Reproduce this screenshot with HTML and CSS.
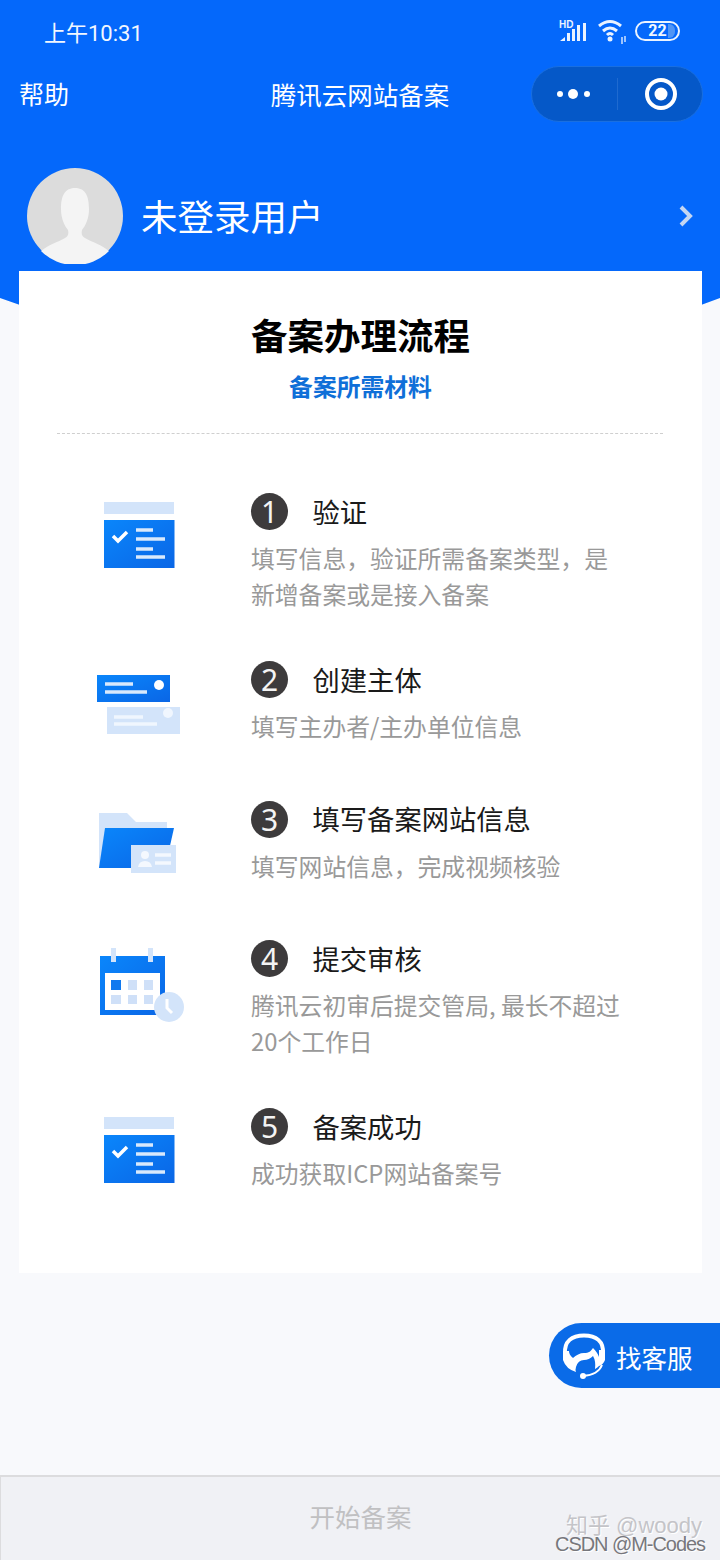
FILE: index.html
```html
<!DOCTYPE html>
<html lang="zh-CN">
<head>
    <meta charset="UTF-8">
    <meta name="viewport" content="width=device-width, initial-scale=1.0">
    <title>腾讯云网站备案</title>
    <link rel="stylesheet" href="styles.css">
</head>
<body>
    <svg class="defs" width="0" height="0">
        <defs>
            <linearGradient id="blue" x1="0" y1="0" x2="1" y2="1">
                <stop offset="0" stop-color="#0a86fb"/>
                <stop offset="1" stop-color="#0a66e6"/>
            </linearGradient>
            <symbol id="icon-check" viewBox="0 0 100 90">
                <rect x="14" y="9" width="70" height="12" fill="#d3e4fa"/>
                <rect x="14" y="27" width="70.500" height="48" fill="url(#blue)"/>
                <path d="M23 43l5 5 9-9" fill="none" stroke="#fff" stroke-width="3.500"/>
                <path d="M46 37h17M46 46h29M46 56h17M46 64h29" stroke="#d9e9fc" stroke-width="3.500"/>
            </symbol>
        </defs>
    </svg>

    <header class="top">
        <div class="status">
            <span class="time">上午10:31</span>
            <div class="status-icons">
                <svg width="30" height="24" viewBox="0 0 30 24">
                    <text x="0" y="9" class="hd">HD</text>
                    <path d="M1 22l5-4v4zM8 22v-8h3v8zM13 22V10h3v12zM18 22V6h3v16zM24 22V4h3v18z" fill="#eaf3ff"/>
                </svg>
                <svg width="30" height="26" viewBox="0 0 30 26">
                    <path d="M2 8q11-9 22 0M6 13q7-6 14 0M10 17q3-3 6 0" fill="none" stroke="#eaf3ff" stroke-width="3"/>
                    <circle cx="13" cy="21" r="2.500" fill="#eaf3ff"/>
                    <path d="M25 19v7M28 18v6" stroke="#cfe2ff" stroke-width="1.500"/>
                </svg>
                <div class="battery"><span class="battery-level"></span><span class="battery-text">22</span></div>
            </div>
        </div>

        <nav class="nav">
            <span class="nav-help">帮助</span>
            <span class="nav-title">腾讯云网站备案</span>
            <div class="capsule">
                <div class="capsule-side">
                    <svg width="36" height="12" viewBox="0 0 36 12">
                        <circle cx="4" cy="6" r="3" fill="#fff"/>
                        <circle cx="17" cy="6" r="5" fill="#fff"/>
                        <circle cx="31" cy="6" r="3" fill="#fff"/>
                    </svg>
                </div>
                <div class="capsule-side capsule-right">
                    <svg width="34" height="34" viewBox="0 0 34 34">
                        <circle cx="17" cy="17" r="14" fill="none" stroke="#fff" stroke-width="4"/>
                        <circle cx="17" cy="17" r="6.500" fill="#fff"/>
                    </svg>
                </div>
            </div>
        </nav>

        <div class="user">
            <svg class="avatar" width="96" height="96" viewBox="0 0 96 96">
                <circle cx="48" cy="48" r="48" fill="#dcdcdc"/>
                <path d="M48 20c-11 0-14 9-14 21 0 9 3 16 7 21 1 4 0 6-3 8-7 4-17 7-24 13a48 48 0 0 0 68 0c-7-6-17-9-24-13-3-2-4-4-3-8 4-5 7-12 7-21 0-12-3-21-14-21z" fill="#f4f4f4"/>
            </svg>
            <span class="user-name">未登录用户</span>
            <svg class="chevron" width="16" height="22" viewBox="0 0 16 22">
                <path d="M3 2l9 9-9 9" fill="none" stroke="#c4d6f2" stroke-width="4"/>
            </svg>
        </div>
    </header>

    <main class="card">
        <h1>备案办理流程</h1>
        <a class="material-link">备案所需材料</a>
        <div class="divider"></div>

        <section class="step">
            <svg class="step-icon" width="100" height="90"><use href="#icon-check"/></svg>
            <div class="step-body">
                <div class="step-head"><span class="num">1</span><span class="step-title">验证</span></div>
                <p>填写信息，验证所需备案类型，是<br>新增备案或是接入备案</p>
            </div>
        </section>

        <section class="step">
            <svg class="step-icon" width="100" height="90" viewBox="0 0 100 90">
                <rect x="17" y="46" width="73" height="27" fill="#d3e4fa"/>
                <path d="M24 56h29M24 63h43" stroke="#f0f6fe" stroke-width="3.500"/>
                <circle cx="78" cy="52" r="5" fill="#f0f6fe"/>
                <rect x="7" y="14" width="73" height="27" fill="url(#blue)"/>
                <path d="M15 23h28M15 31h42" stroke="#d9e9fc" stroke-width="3.500"/>
                <circle cx="69" cy="24" r="5" fill="#fff"/>
            </svg>
            <div class="step-body">
                <div class="step-head"><span class="num">2</span><span class="step-title">创建主体</span></div>
                <p>填写主办者/主办单位信息</p>
            </div>
        </section>

        <section class="step">
            <svg class="step-icon" width="100" height="90" viewBox="0 0 100 90">
                <path d="M9 12h28l9 9h31v46H9z" fill="#d3e4fa"/>
                <path d="M15 27h69l-9 40H9z" fill="url(#blue)"/>
                <rect x="41" y="44" width="45" height="28" fill="#d3e4fa"/>
                <circle cx="55" cy="54" r="4" fill="#f4f8fe"/>
                <path d="M48 66q1-6 7-6t7 6z" fill="#f4f8fe"/>
                <path d="M65 54h16M65 62h16" stroke="#f4f8fe" stroke-width="3.500"/>
            </svg>
            <div class="step-body">
                <div class="step-head"><span class="num">3</span><span class="step-title">填写备案网站信息</span></div>
                <p>填写网站信息，完成视频核验</p>
            </div>
        </section>

        <section class="step">
            <svg class="step-icon" width="100" height="90" viewBox="0 0 100 90">
                <rect x="10" y="16" width="65" height="59" fill="url(#blue)"/>
                <rect x="15" y="33" width="55" height="37" fill="#fff"/>
                <path d="M23.500 8v14M60.500 8v14" stroke="#d3e4fa" stroke-width="5"/>
                <rect x="21" y="40" width="10" height="10" fill="#1079ef"/>
                <path d="M38 40h9v10h-9zM54 40h9v10h-9zM21 55h10v9H21zM38 55h9v9h-9zM54 55h9v9h-9z" fill="#cfe0f8"/>
                <circle cx="79" cy="67" r="15" fill="#d3e4fa"/>
                <path d="M77 59v9l5 5" fill="none" stroke="#fff" stroke-width="3"/>
            </svg>
            <div class="step-body">
                <div class="step-head"><span class="num">4</span><span class="step-title">提交审核</span></div>
                <p>腾讯云初审后提交管局, 最长不超过<br>20个工作日</p>
            </div>
        </section>

        <section class="step">
            <svg class="step-icon" width="100" height="90"><use href="#icon-check"/></svg>
            <div class="step-body">
                <div class="step-head"><span class="num">5</span><span class="step-title">备案成功</span></div>
                <p>成功获取ICP网站备案号</p>
            </div>
        </section>
    </main>

    <div class="spacer"></div>

    <footer class="bottom-bar">开始备案</footer>

    <div class="service">
        <svg width="46" height="52" viewBox="0 0 46 52">
            <path d="M4 24C3 11 11 5.500 23 5.500s20 5.500 19 18.500" fill="none" stroke="#fff" stroke-width="4"/>
            <path d="M2 21h6c0 2 1 5 4 7 3-3 7-5 11-5 5 0 7-2 9-5 3 3 5 6 6 9v-7h6v10q-2 5-6 6-2 2-4 3 1-8-2-13-4 4-9 4-6 0-8 7-1 3 0 5-10-3-13-12z" fill="#fff"/>
            <path d="M41 35q-4 10-19 11" fill="none" stroke="#fff" stroke-width="2"/>
            <circle cx="22" cy="46" r="3" fill="#fff"/>
        </svg>
        <span>找客服</span>
    </div>

    <div class="watermark">
        <span class="wm-zhihu">知乎 @woody</span>
        <span class="wm-csdn">CSDN @M-Codes</span>
    </div>
</body>
</html>
```

FILE: styles.css
```css
* {
    box-sizing: border-box;
}
html, body {
    margin: 0;
    padding: 0;
}
body {
    position: relative;
    display: flex;
    flex-direction: column;
    width: 720px;
    height: 1560px;
    overflow: hidden;
    background-color: #f8f9fc;
    color: #111;
    font-family: "Noto Sans CJK SC", "Noto Sans", sans-serif;
}
.defs {
    position: absolute;
}

/* cabecalho azul */
.top {
    height: 323px;
    background-color: #0468fb;
    color: #fff;
    clip-path: polygon(0 0, 100% 0, 100% 298px, 701px 305px, 701px 323px, 20px 323px, 20px 305px, 0 298px);
    flex-shrink: 0;
}
.status {
    display: flex;
    justify-content: space-between;
    align-items: center;
    height: 64px;
    padding: 0 40px 3px 44px;
}
.time {
    font-size: 22px;
    font-family: Roboto, "Noto Sans CJK SC", sans-serif;
    color: #f2f7ff;
}
.status-icons {
    display: flex;
    align-items: center;
    gap: 8px;
}
.hd {
    font: bold 10px "Liberation Sans", sans-serif;
    fill: #eaf3ff;
}
.battery {
    position: relative;
    width: 45px;
    height: 20px;
    border: 2px solid #eaf3ff;
    border-radius: 10px;
    overflow: hidden;
    text-align: center;
}
.battery-level {
    position: absolute;
    right: 3px;
    top: 1px;
    width: 7px;
    height: 14px;
    background-color: #4f95f5;
    border-radius: 0 6px 6px 0;
}
.battery-text {
    position: relative;
    display: block;
    font: bold 16px/16px Roboto, sans-serif;
    color: #f2f7ff;
}
.nav {
    position: relative;
    display: flex;
    align-items: center;
    justify-content: space-between;
    height: 60px;
    padding: 0 17px 0 19px;
}
.nav-help {
    margin-top: -2px;
    font-size: 25px;
}
.nav-title {
    position: absolute;
    left: 0;
    right: 0;
    margin-top: -2px;
    text-align: center;
    font-size: 25.500px;
}
.capsule {
    position: relative;
    display: flex;
    align-items: center;
    width: 172px;
    height: 56px;
    background-color: #0558c8;
    border: 1px solid #1a6fe0;
    border-radius: 28px;
}
.capsule-side {
    display: flex;
    justify-content: center;
    align-items: center;
    width: 86px;
    height: 32px;
}
.capsule-right {
    border-left: 1px solid #1f6ad0;
    padding-left: 3px;
}
.user {
    display: flex;
    align-items: center;
    height: 96px;
    margin-top: 44px;
    padding: 0 27px;
}
.user-name {
    margin: -2px 0 0 18px;
    font-size: 36.500px;
    flex: 1;
}
.chevron {
    margin-right: -1px;
}

/* cartao branco */
.card {
    position: relative;
    flex-shrink: 0;
    width: 683px;
    height: 1002px;
    margin: -52px 0 0 19px;
    background-color: #fff;
    padding-top: 39px;
    text-align: center;
}
h1 {
    margin: 0;
    font-size: 36.500px;
    line-height: 50px;
    font-weight: 700;
    color: #000;
}
.material-link {
    display: block;
    margin-top: 9px;
    font-size: 23.800px;
    line-height: 34px;
    font-weight: 700;
    color: #0f6fd8;
}
.divider {
    height: 1px;
    margin: 30px 39px 59px 38px;
    border-top: 1px dashed #cfcfcf;
}
.step {
    display: flex;
    min-height: 139.500px;
    padding: 0 0 49px 71px;
    text-align: left;
}
.step-icon {
    flex-shrink: 0;
}
.step-body {
    margin-left: 61px;
}
.step-head {
    display: flex;
    align-items: center;
    height: 37px;
}
.num {
    display: flex;
    justify-content: center;
    align-items: center;
    width: 37px;
    height: 37px;
    border-radius: 50%;
    background-color: #3d3b3c;
    color: #f4f4f4;
    font-family: "Noto Sans", sans-serif;
    font-size: 30px;
    line-height: 37px;
}
.step-title {
    margin: -2px 0 0 24.500px;
    font-size: 27.300px;
    color: #1a1a1a;
}
.step p {
    margin: 10px 0 0;
    font-size: 23.800px;
    line-height: 36px;
    color: #999;
}

.spacer {
    flex: 1;
}
.bottom-bar {
    flex-shrink: 0;
    height: 85px;
    padding-top: 19px;
    background-color: #f0f1f5;
    border-top: 2px solid #dcdcde;
    border-left: 1px solid #dcdcde;
    text-align: center;
    font-size: 25.500px;
    line-height: 40px;
    color: #c0c0c2;
}

/* botao flutuante */
.service {
    position: absolute;
    top: 1323px;
    right: 0;
    display: flex;
    align-items: center;
    width: 171px;
    height: 65px;
    padding-left: 12px;
    background-color: #0a6be8;
    border-radius: 33px 0 0 33px;
    color: #fff;
    font-size: 25.500px;
}
.service span {
    margin: 2px 0 0 9px;
}

/* marcas d'agua */
.watermark {
    position: absolute;
    right: 15px;
    top: 1516px;
    display: flex;
    flex-direction: column;
    align-items: flex-end;
    font-family: "Liberation Sans", "Noto Sans CJK SC", sans-serif;
    text-shadow: 1px 1px 0 #fff;
}
.wm-zhihu {
    font-size: 22px;
    line-height: 20px;
    margin-right: 3px;
    color: #c4c4c8;
}
.wm-csdn {
    font-size: 20px;
    line-height: 16px;
    letter-spacing: -1.050px;
    color: #77777c;
}
```
